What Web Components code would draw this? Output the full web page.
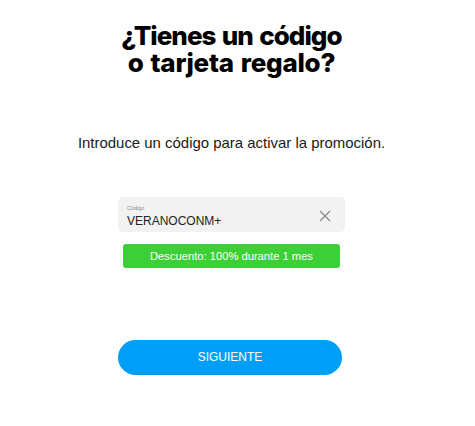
<!DOCTYPE html>
<html lang="es">
<head>
<meta charset="utf-8">
<title>Código regalo</title>
<style>
  html, body { margin: 0; background: #fff; }
  body { font-family: "Liberation Sans", Arial, sans-serif; }
</style>
</head>
<body>
<promo-page>
  <span slot="title">¿Tienes un código<br><span style="letter-spacing: -.25px">o tarjeta regalo?</span></span>
  <span slot="intro">Introduce un código para activar la promoción.</span>
  <code-field label="Código" value="VERANOCONM+"></code-field>
  <promo-banner>Descuento: 100% durante 1 mes</promo-banner>
  <next-button>SIGUIENTE</next-button>
</promo-page>

<script>
class PromoPage extends HTMLElement {
  constructor() {
    super();
    this.attachShadow({ mode: "open" });
    this.shadowRoot.innerHTML = `
      <style>
        :host {
          display: flex;
          flex-direction: column;
          align-items: center;
          width: 475px;
          height: 426px;
          overflow: hidden;
          color: #1a1a1a;
        }
        h1 {
          margin: 22px 0 0 -12px;
          font: 800 26px/27px Inter, Lato, sans-serif;
          letter-spacing: -.95px;
          word-spacing: 1.5px;
          color: #000;
          text-align: center;
        }
        p {
          margin: 58px 0 0 -12px;
          font-size: 14.95px;
          line-height: 18px;
        }
        .form {
          display: flex;
          flex-direction: column;
          align-items: center;
          width: 227px;
          margin: 45px 0 0 -12px;
        }
      </style>
      <h1><slot name="title"></slot></h1>
      <p><slot name="intro"></slot></p>
      <div class="form"><slot></slot></div>
    `;
  }
}

class CodeField extends HTMLElement {
  constructor() {
    super();
    this.attachShadow({ mode: "open" });
    this.shadowRoot.innerHTML = `
      <style>
        :host {
          display: flex;
          align-items: center;
          justify-content: space-between;
          box-sizing: border-box;
          width: 227px;
          height: 35px;
          padding: 0 14px 0 9px;
          background: #f2f2f2;
          border-radius: 5px;
        }
        .text { padding-top: 3px; }
        .label { font-size: 5.5px; line-height: 7px; color: #888; }
        .value { font-size: 12px; line-height: 14px; color: #222; margin-top: 2px; }
        svg { display: block; margin-top: 2px; }
      </style>
      <div class="text">
        <div class="label"></div>
        <div class="value"></div>
      </div>
      <svg width="12" height="12" viewBox="0 0 12 12" fill="none" stroke="#8c8c8c" stroke-width="1.4">
        <path d="M1 1l10 10M11 1L1 11"/>
      </svg>
    `;
    this.shadowRoot.querySelector(".label").textContent = this.getAttribute("label");
    this.shadowRoot.querySelector(".value").textContent = this.getAttribute("value");
  }
}

class PromoBanner extends HTMLElement {
  constructor() {
    super();
    this.attachShadow({ mode: "open" });
    this.shadowRoot.innerHTML = `
      <style>
        :host {
          display: flex;
          align-items: center;
          justify-content: center;
          box-sizing: border-box;
          width: 217px;
          height: 24px;
          margin-top: 12px;
          padding-bottom: 1px;
          background: #3ccf36;
          border-radius: 3px;
          color: #fff;
          font-size: 11.2px;
        }
      </style>
      <slot></slot>
    `;
  }
}

class NextButton extends HTMLElement {
  constructor() {
    super();
    this.attachShadow({ mode: "open" });
    this.shadowRoot.innerHTML = `
      <style>
        :host {
          display: flex;
          align-items: center;
          justify-content: center;
          box-sizing: border-box;
          width: 224px;
          height: 35px;
          margin: 72px 3px 0 0;
          padding-bottom: 1px;
          background: #009ff7;
          border-radius: 18px;
          color: #fff;
          font-size: 12px;
        }
      </style>
      <slot></slot>
    `;
  }
}

customElements.define("promo-page", PromoPage);
customElements.define("code-field", CodeField);
customElements.define("promo-banner", PromoBanner);
customElements.define("next-button", NextButton);
</script>
</body>
</html>
